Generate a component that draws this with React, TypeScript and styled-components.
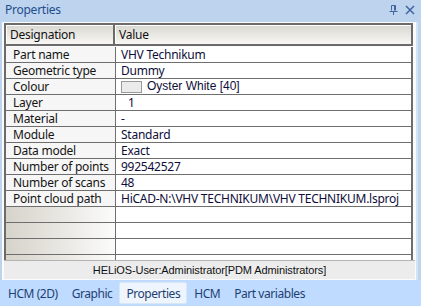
import React from 'react'
import styled, { createGlobalStyle } from 'styled-components'

const GlobalStyle = createGlobalStyle`
  html, body { margin: 0; padding: 0; background: #bdd3ee; }
`

type Prop = { label: string, value: React.ReactNode, indent?: boolean }

const props: Prop[] = [
  { label: 'Part name', value: 'VHV Technikum' },
  { label: 'Geometric type', value: 'Dummy' },
  { label: 'Colour', value: 'colour' },
  { label: 'Layer', value: '1', indent: true },
  { label: 'Material', value: '-' },
  { label: 'Module', value: 'Standard' },
  { label: 'Data model', value: 'Exact' },
  { label: 'Number of points', value: '992542527' },
  { label: 'Number of scans', value: '48' },
  { label: 'Point cloud path', value: 'HiCAD-N:\\VHV TECHNIKUM\\VHV TECHNIKUM.lsproj' },
]

const tabs = ['HCM (2D)', 'Graphic', 'Properties', 'HCM', 'Part variables']

const App = () => {
  return (
    <Window>
      <GlobalStyle />
      <TitleBar>
        <span>Properties</span>
        <TitleIcons>
          <svg width="9" height="11" viewBox="0 0 9 11">
            <path d="M2.5 1.5 V6.5 M5.5 1.5 V6.5 M6.5 1.5 V6.5 M2.5 1.5 H6.5 M0.5 7.5 H8.5 M4.5 7.5 V11" stroke="#41649e" strokeWidth="1" fill="none" />
          </svg>
          <svg width="10" height="10" viewBox="0 0 10 10">
            <path d="M1 1 L9 9 M9 1 L1 9" stroke="#41649e" strokeWidth="1.5" fill="none" />
          </svg>
        </TitleIcons>
      </TitleBar>
      <Body>
        <Panel>
          <Grid>
            <HeaderRow>
              <HeaderCell>Designation</HeaderCell>
              <HeaderCell>Value</HeaderCell>
            </HeaderRow>
            {props.map((p, i) => (
              <Row key={i}>
                <Label>{p.label}</Label>
                <Value indent={p.indent}>
                  {p.value === 'colour' ? (
                    <ColourValue>
                      <Swatch />
                      Oyster White [40]
                    </ColourValue>
                  ) : p.value}
                </Value>
              </Row>
            ))}
            {[0, 1, 2, 3].map(i => (
              <Row key={'e' + i}>
                <Label empty />
                <Value />
              </Row>
            ))}
          </Grid>
          <StatusBar>HELiOS-User:Administrator[PDM Administrators]</StatusBar>
        </Panel>
      </Body>
      <TabBar>
        {tabs.map(t => (
          <Tab key={t} active={t === 'Properties'}>{t}</Tab>
        ))}
      </TabBar>
    </Window>
  )
}

export default App

const Window = styled.div`
  width: 421px;
  height: 306px;
  display: flex;
  flex-direction: column;
  background: #bdd3ee;
  font-family: 'Noto Sans', sans-serif;
  font-size: 12px;
  letter-spacing: -0.25px;
  overflow: hidden;
`

const TitleBar = styled.div`
  height: 22px;
  display: flex;
  align-items: center;
  justify-content: space-between;
  padding: 0 6px 0 5px;
  color: #1e4e8c;
  span { margin-top: -3px; }
`

const TitleIcons = styled.div`
  display: flex;
  align-items: center;
  gap: 7px;
  margin-top: -3px;
`

const Body = styled.div`
  flex: 1;
  display: flex;
  padding: 0 3px 0 2px;
  min-height: 0;
`

const Panel = styled.div`
  flex: 1;
  display: flex;
  flex-direction: column;
  background: #fbfbfb;
  border-right: 2px solid #d3e2f5;
  padding: 1px 1px 1px 2px;
  min-height: 0;
`

const Grid = styled.div`
  height: 237px;
  overflow: hidden;
  border-left: 2px solid #6b6b6b;
  margin-right: 2px;
`

const HeaderRow = styled.div`
  display: grid;
  grid-template-columns: 109px 1fr;
  grid-template-rows: 19px;
  height: 19px;
  border-top: 2px solid #6b6b6b;
  border-bottom: 2px solid #6b6b6b;
  margin-bottom: 1px;
  background: linear-gradient(#d9d7d0, #f8f7f4);
`

const HeaderCell = styled.div`
  display: flex;
  align-items: center;
  padding-left: 4px;
  color: #111;
  line-height: 19px;
  border-right: 2px solid #6b6b6b;
  box-shadow: inset 1px 1px 0 #ffffff;
`

const Row = styled.div`
  display: grid;
  grid-template-columns: 110px 1fr;
  grid-template-rows: 15px;
  height: 15px;
  border-bottom: 1px solid #6e6e6e;
`

const Label = styled.div<{ empty?: boolean }>`
  display: flex;
  align-items: center;
  padding-left: 7px;
  line-height: 15px;
  color: #141414;
  white-space: nowrap;
  overflow: hidden;
  border-right: 1px solid #6e6e6e;
  background: ${p => (p.empty ? 'linear-gradient(90deg, #d6d3ca, #fbfbfa)' : '#f6f6f6')};
`

const Value = styled.div<{ indent?: boolean }>`
  display: flex;
  align-items: center;
  padding-left: ${p => (p.indent ? '12px' : '5px')};
  line-height: 15px;
  color: #0e0e3a;
  background: #ffffff;
  white-space: nowrap;
  overflow: hidden;
  border-right: 2px solid #6e6e6e;
`

const ColourValue = styled.span`
  display: flex;
  align-items: center;
  gap: 5px;
  letter-spacing: 0;
  font-family: 'Liberation Sans', Arial, sans-serif;
`

const Swatch = styled.span`
  width: 19px;
  height: 10px;
  background: #ebebeb;
  border: 1px solid #9a9a9a;
`

const StatusBar = styled.div`
  height: 18px;
  display: flex;
  align-items: center;
  justify-content: center;
  background: #ececec;
  border-top: 1px solid #b4b4b4;
  color: #111;
  font-family: 'Liberation Sans', Arial, sans-serif;
  font-size: 11px;
  letter-spacing: -0.1px;
`

const TabBar = styled.div`
  height: 26px;
  display: flex;
  align-items: center;
  padding: 0 1px;
  background: #bfdbff;
`

const Tab = styled.div<{ active?: boolean }>`
  height: 20px;
  display: flex;
  align-items: center;
  padding: 0 6px;
  letter-spacing: -0.45px;
  color: #1e3f73;
  border-radius: 2px;
  background: ${p => (p.active ? '#eef5fd' : 'transparent')};
  border: 1px solid ${p => (p.active ? '#d8e6f6' : 'transparent')};
`
